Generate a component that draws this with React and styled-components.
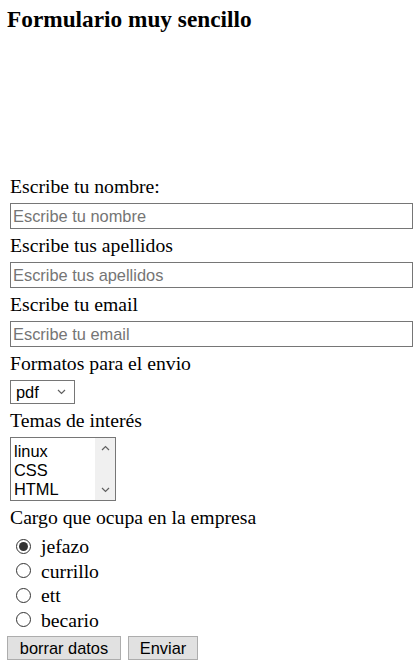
import React, { useState } from "react";
import styled, { createGlobalStyle } from "styled-components";

const GlobalStyle = createGlobalStyle`
  html, body {
    margin: 0;
    padding: 0;
    background: #ffffff;
  }
  body {
    font-family: "Liberation Serif", "Times New Roman", serif;
    color: #000000;
  }
`;

const temas = ["linux", "CSS", "HTML"];
const cargos = ["jefazo", "currillo", "ett", "becario"];

function Chevron({ up }) {
  return (
    <svg width="9" height="6" viewBox="0 0 9 6">
      <path
        d={up ? "M1 5 L4.5 1.5 L8 5" : "M1 1 L4.5 4.5 L8 1"}
        fill="none"
        stroke="#606060"
        strokeWidth="1.2"
      />
    </svg>
  );
}

function App() {
  const [cargo, setCargo] = useState("jefazo");

  return (
    <Page>
      <GlobalStyle />
      <Title>Formulario muy sencillo</Title>
      <Form onSubmit={(e) => e.preventDefault()}>
        <Fields>
          <Label>Escribe tu nombre:</Label>
          <TextInput type="text" placeholder="Escribe tu nombre" />
          <Label>Escribe tus apellidos</Label>
          <TextInput type="text" placeholder="Escribe tus apellidos" />
          <Label>Escribe tu email</Label>
          <TextInput type="email" placeholder="Escribe tu email" />

          <Label>Formatos para el envio</Label>
          <SelectBox>
            <span>pdf</span>
            <Chevron />
          </SelectBox>

          <Label>Temas de interés</Label>
          <ListBox>
            <Options>
              {temas.map((t) => (
                <Option key={t}>{t}</Option>
              ))}
            </Options>
            <ScrollTrack>
              <Chevron up />
              <Chevron />
            </ScrollTrack>
          </ListBox>

          <Label>Cargo que ocupa en la empresa</Label>
          <RadioGroup>
            {cargos.map((c) => (
              <RadioRow key={c} onClick={() => setCargo(c)}>
                <RadioCircle checked={cargo === c} />
                <RadioText>{c}</RadioText>
              </RadioRow>
            ))}
          </RadioGroup>
        </Fields>

        <ButtonRow>
          <FormButton type="reset" $w={114}>
            borrar datos
          </FormButton>
          <FormButton type="submit" $w={70}>
            Enviar
          </FormButton>
        </ButtonRow>
      </Form>
    </Page>
  );
}

const Page = styled.div`
  padding: 0 7px;
`;

const Title = styled.h3`
  margin: 6px 0 0;
  font-size: 23.3px;
  line-height: 26px;
  font-weight: bold;
`;

const Form = styled.form`
  margin-top: 138px;
  display: flex;
  flex-direction: column;
`;

const Fields = styled.div`
  display: flex;
  flex-direction: column;
  align-items: flex-start;
  padding-left: 3px;
`;

const Label = styled.label`
  display: block;
  padding: 5px 0;
  font-size: 19.7px;
  line-height: 23px;
`;

const TextInput = styled.input`
  box-sizing: border-box;
  width: 403px;
  height: 26px;
  margin: 0;
  padding: 0 2px;
  border: 1px solid #767676;
  border-radius: 0;
  font-family: "Liberation Sans", Arial, sans-serif;
  font-size: 16.4px;
  outline: none;

  &::placeholder {
    color: #757575;
  }
`;

const SelectBox = styled.div`
  box-sizing: border-box;
  width: 65px;
  height: 24px;
  display: flex;
  align-items: center;
  justify-content: space-between;
  padding: 0 8px 0 5px;
  border: 1px solid #767676;
  font-family: "Liberation Sans", Arial, sans-serif;
  font-size: 16.4px;
`;

const ListBox = styled.div`
  box-sizing: border-box;
  width: 106px;
  height: 64px;
  display: flex;
  border: 1px solid #767676;
`;

const Options = styled.div`
  flex: 1;
  padding: 4px 0 0 3px;
  font-family: "Liberation Sans", Arial, sans-serif;
  font-size: 16.4px;
`;

const Option = styled.div`
  line-height: 19px;
`;

const ScrollTrack = styled.div`
  width: 20px;
  background: #f0f0f0;
  display: flex;
  flex-direction: column;
  align-items: center;
  justify-content: space-between;
  padding: 7px 0;
`;

const RadioGroup = styled.div`
  display: flex;
  flex-direction: column;
`;

const RadioRow = styled.div`
  display: flex;
  align-items: center;
  height: 24.5px;
  padding-left: 6px;
  cursor: pointer;
`;

const RadioCircle = styled.span`
  box-sizing: border-box;
  width: 15px;
  height: 15px;
  border-radius: 50%;
  border: 1px solid #333333;
  display: flex;
  align-items: center;
  justify-content: center;

  &::after {
    content: "";
    width: 9px;
    height: 9px;
    border-radius: 50%;
    background: ${(props) => (props.checked ? "#333333" : "transparent")};
  }
`;

const RadioText = styled.span`
  margin-left: 10px;
  font-size: 19.7px;
  line-height: 24.5px;
`;

const ButtonRow = styled.div`
  display: flex;
  gap: 7px;
  margin-top: 4px;
`;

const FormButton = styled.button`
  box-sizing: border-box;
  width: ${(props) => props.$w}px;
  height: 24px;
  padding: 0;
  margin: 0;
  border: 1px solid #adadad;
  border-radius: 0;
  background: #e1e1e1;
  color: #000000;
  font-family: "Liberation Sans", Arial, sans-serif;
  font-size: 16.4px;
  text-align: center;
  cursor: pointer;
`;

export default App;
